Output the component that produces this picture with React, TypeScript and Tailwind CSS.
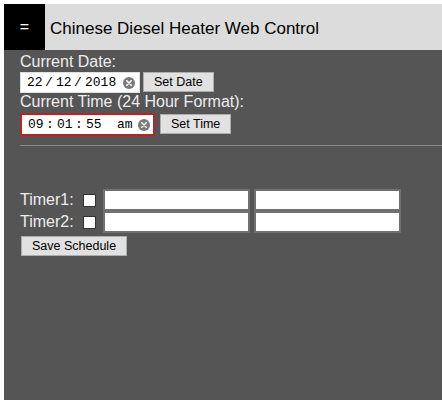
import React from "react"

function ClearIcon() {
    return (
        <svg width="12" height="12" viewBox="0 0 12 12" className="shrink-0">
            <circle cx="6" cy="6" r="6" fill="#7b7b7b" />
            <path d="M3.8 3.8 L8.2 8.2 M8.2 3.8 L3.8 8.2" stroke="#fff" strokeWidth="1.6" strokeLinecap="round" />
        </svg>
    )
}

function Seg({ children, w }: { children: React.ReactNode; w: string }) {
    return <span className={`${w} inline-block text-left`}>{children}</span>
}

function Sep({ children }: { children: React.ReactNode }) {
    return <span className="w-[14px] inline-block text-center">{children}</span>
}

function Checkbox() {
    return <span className="w-[13px] h-[13px] bg-white border border-[#333] inline-block shrink-0" />
}

export default function App() {
    const sans = "font-['Liberation_Sans',Arial,sans-serif]"
    const mono = "font-['Liberation_Mono','Courier_New',monospace] text-[13px] text-black"
    const btn = `${sans} h-[20px] px-[10px] text-[12.5px] text-black bg-[#e1e1e1] border border-[#adadad] leading-none`

    return (
        <div className={`${sans} bg-white pl-[4px] pt-[4px] min-h-[400px] flex flex-col`}>
            <div className="flex h-[46px] bg-[#dcdcdc]">
                <div className="w-[41px] bg-black text-white text-[16px] flex items-center justify-center">=</div>
                <div className="pl-[5px] pt-[3px] text-[17px] text-black flex items-center">Chinese Diesel Heater Web Control</div>
            </div>

            <div className="flex-1 bg-[#555555] pt-[3px] pl-[16px] text-[#eeeeee] text-[16px]">
                <div className="h-[18px] leading-[18px]">Current Date:</div>
                <div className="flex items-start mt-[1px] gap-[3px]">
                    <div className={`${mono} w-[120px] h-[21px] bg-white border border-[#e0e0e0] flex items-center pl-[6px]`}>
                        <Seg w="w-[15px]">22</Seg>
                        <Sep>/</Sep>
                        <Seg w="w-[15px]">12</Seg>
                        <Sep>/</Sep>
                        <Seg w="w-[31px]">2018</Seg>
                        <span className="ml-[7px]"><ClearIcon /></span>
                    </div>
                    <button className={btn}>Set Date</button>
                </div>

                <div className="h-[18px] leading-[18px]">Current Time (24 Hour Format):</div>
                <div className="flex items-start mt-[2px] gap-[5px]">
                    <div className={`${mono} w-[135px] h-[23px] bg-white border-2 border-[#c02020] flex items-center pl-[6px]`}>
                        <Seg w="w-[15px]">09</Seg>
                        <Sep>:</Sep>
                        <Seg w="w-[15px]">01</Seg>
                        <Sep>:</Sep>
                        <Seg w="w-[15px]">55</Seg>
                        <span className="ml-[16px] w-[15px]">am</span>
                        <span className="ml-[6px]"><ClearIcon /></span>
                    </div>
                    <button className={`${btn} mt-[1px]`}>Set Time</button>
                </div>

                <div className="mt-[9px] h-px bg-[#8a8a8a]" />

                <div className="mt-[43px] flex flex-col">
                    {["Timer1:", "Timer2:"].map((t) => (
                        <div key={t} className="flex items-center h-[22px]">
                            <span className="w-[63px]">{t}</span>
                            <Checkbox />
                            <span className="w-[147px] h-[22px] bg-white border-2 border-[#707070] ml-[7px]" />
                            <span className="w-[147px] h-[22px] bg-white border-2 border-[#707070] ml-[4px]" />
                        </div>
                    ))}
                    <div>
                        <button className={`${btn} ml-[1px] px-[10px]`}>Save Schedule</button>
                    </div>
                </div>
            </div>
        </div>
    )
}
